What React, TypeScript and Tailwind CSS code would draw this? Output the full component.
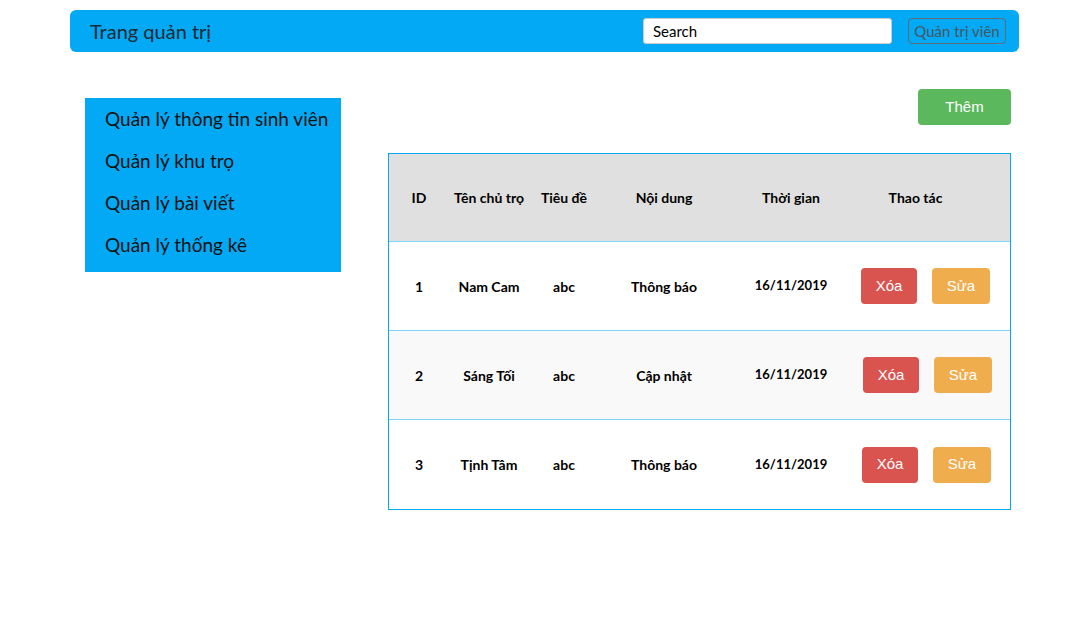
import React from "react"

const font = { fontFamily: "Lato, 'Noto Sans', sans-serif" }

const rows = [
  { id: 1, name: "Nam Cam", title: "abc", content: "Thông báo", time: "16/11/2019", bg: "bg-white", shift: "pl-[8px]" },
  { id: 2, name: "Sáng Tối", title: "abc", content: "Cập nhật", time: "16/11/2019", bg: "bg-[#f9f9f9]", shift: "pl-[10px]" },
  { id: 3, name: "Tịnh Tâm", title: "abc", content: "Thông báo", time: "16/11/2019", bg: "bg-white", shift: "pl-[9px]" },
]

const cols = "grid grid-cols-[60px_80px_70px_130px_124px_1fr] items-center"

export default function App() {
  return (
    <div className="min-h-screen bg-white pt-[10px] font-['Lato',sans-serif]" style={font}>
      {/* Top bar */}
      <header className="ml-[70px] mr-[50px] h-[42px] rounded-md bg-[#03a9f4] flex items-center pl-5 pr-[13px]">
        <span className="text-[20px] text-[#1f2a33]">Trang quản trị</span>
        <input
          className="ml-auto w-[249px] h-[26px] rounded-[3px] bg-white border border-[#ccc] px-[9px] text-[15px] text-black outline-none"
          defaultValue="Search"
        />
        <button className="ml-4 h-[26px] w-[98px] rounded border border-[#5d6b75] text-[15px] text-[#4a5660]">
          Quản trị viên
        </button>
      </header>

      <div className="flex items-start mt-[37px]">
        {/* Sidebar */}
        <nav className="ml-[85px] mt-[9px] w-[256px] h-[174px] bg-[#03a9f4] flex flex-col">
          {["Quản lý thông tin sinh viên", "Quản lý khu trọ", "Quản lý bài viết", "Quản lý thống kê"].map((t) => (
            <div key={t} className="h-[42px] flex items-center pl-5 text-[19px] text-[#111] whitespace-nowrap">
              {t}
            </div>
          ))}
        </nav>

        {/* Main */}
        <main className="ml-[47px] w-[623px] flex flex-col">
          <div className="flex justify-end">
            <button className="w-[93px] h-[36px] rounded bg-[#5cb85c] text-white text-[15px] font-['Liberation_Sans',Arial,sans-serif]">
              Thêm
            </button>
          </div>

          <div className="mt-[28px] border border-[#03a9f4] text-[14px] font-bold text-black">
            <div className={`${cols} h-[88px] bg-[#e0e0e0] border-b border-[#7fd4fb] text-center`}>
              <div>ID</div>
              <div className="whitespace-nowrap">Tên chủ trọ</div>
              <div>Tiêu đề</div>
              <div>Nội dung</div>
              <div>Thời gian</div>
              <div className="pr-8">Thao tác</div>
            </div>
            {rows.map((r, i) => (
              <div
                key={r.id}
                className={`${cols} h-[89px] ${r.bg} text-center ${i < rows.length - 1 ? "border-b border-[#7fd4fb]" : ""}`}
              >
                <div>{r.id}</div>
                <div>{r.name}</div>
                <div>{r.title}</div>
                <div>{r.content}</div>
                <div className="text-[13px]">{r.time}</div>
                <div className={`flex gap-[15px] ${r.shift} font-normal font-['Liberation_Sans',Arial,sans-serif]`}>
                  <button className="w-[56px] h-[36px] rounded bg-[#d9534f] text-white text-[15px]">Xóa</button>
                  <button className="w-[58px] h-[36px] rounded bg-[#f0ad4e] text-white text-[15px]">Sửa</button>
                </div>
              </div>
            ))}
          </div>
        </main>
      </div>
    </div>
  )
}
